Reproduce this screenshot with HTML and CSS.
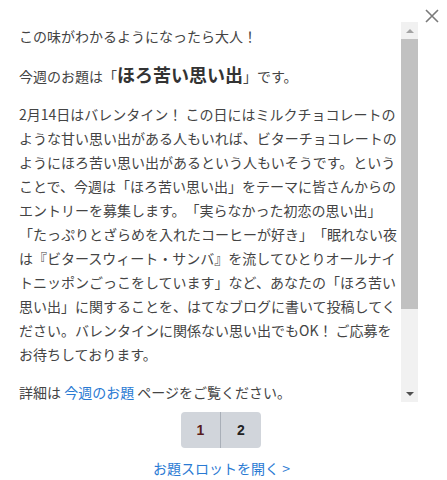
FILE: index.html
```html
<!DOCTYPE html>
<html lang="ja">
<head>
  <meta charset="UTF-8" />
  <title>今週のお題</title>
  <link rel="stylesheet" href="styles.css">
</head>
<body>
  <div class="modal">
    <button type="button" class="close" aria-label="閉じる">
      <svg width="14" height="14" viewBox="0 0 14 14"><path d="M1 1 L13 13 M13 1 L1 13" stroke="#7a7a7a" stroke-width="1.6" fill="none"/></svg>
    </button>

    <div class="scroll-area">
      <div class="theme-body">
        <p>この味がわかるようになったら大人！</p>
        <p>今週のお題は「<strong class="theme-title">ほろ苦い思い出</strong>」です。</p>
        <p>2月14日はバレンタイン！ この日にはミルクチョコレートのような甘い思い出がある人もいれば、ビターチョコレートのようにほろ苦い思い出があるという人もいそうです。ということで、今週は「ほろ苦い思い出」をテーマに皆さんからのエントリーを募集します。「実らなかった初恋の思い出」「たっぷりとざらめを入れたコーヒーが好き」「眠れない夜は『ビタースウィート・サンバ』を流してひとりオールナイトニッポンごっこをしています」など、あなたの「ほろ苦い思い出」に関することを、はてなブログに書いて投稿してください。バレンタインに関係ない思い出でもOK！ ご応募をお待ちしております。</p>
        <p>詳細は <a href="#">今週のお題</a> ページをご覧ください。</p>
      </div>
      <div class="scrollbar" aria-hidden="true">
        <div class="sb-btn">
          <svg width="8" height="4" viewBox="0 0 8 4"><path d="M0 4 L4 0 L8 4 Z" fill="#a3a3a3"/></svg>
        </div>
        <div class="sb-track"><div class="sb-thumb"></div></div>
        <div class="sb-btn">
          <svg width="8" height="4" viewBox="0 0 8 4"><path d="M0 0 L8 0 L4 4 Z" fill="#505050"/></svg>
        </div>
      </div>
    </div>

    <div class="pager">
      <button type="button" class="current">1</button>
      <button type="button">2</button>
    </div>

    <a class="slot-link" href="#">お題スロットを開く &gt;</a>
  </div>
</body>
</html>
```

FILE: styles.css
```css
body {
  margin: 0;
  background: #fff;
  color: #444;
  font-family: "Noto Sans CJK JP", "Noto Sans", sans-serif;
  font-size: 14px;
  text-spacing-trim: space-all;
}
.modal {
  position: relative;
  width: 447px;
  height: 480px;
  padding: 22px 29px 0 19px;
  box-sizing: border-box;
  display: flex;
  flex-direction: column;
  align-items: stretch;
}
.close {
  position: absolute;
  top: 9px;
  right: 8px;
  width: 14px;
  height: 14px;
  padding: 0;
  border: none;
  background: none;
  cursor: pointer;
  line-height: 0;
}

.scroll-area {
  display: flex;
  height: 380px;
}
.theme-body {
  flex: 1;
  overflow: hidden;
  line-height: 24px;
  padding-top: 2px;
}
.theme-body p {
  margin: 0 0 14px 0;
}
.theme-title {
  font-size: 18px;
  font-weight: bold;
  color: #333;
}
.theme-body a {
  color: #2a7ad3;
  text-decoration: none;
}

.scrollbar {
  width: 17px;
  flex: none;
  display: flex;
  flex-direction: column;
  background: #f1f1f1;
}
.sb-btn {
  height: 17px;
  display: flex;
  align-items: center;
  justify-content: center;
}
.sb-track {
  flex: 1;
}
.sb-thumb {
  height: 270px;
  background: #c1c1c1;
}

.pager {
  display: flex;
  justify-content: center;
  margin: 10px 0 0 0;
  padding-left: 5px;
}
.pager button {
  width: 40px;
  height: 36px;
  padding: 0;
  border: none;
  background: #d1d5db;
  font-family: "Liberation Sans", Arial, sans-serif;
  font-size: 14px;
  font-weight: bold;
  color: #222;
  cursor: pointer;
}
.pager button:first-child {
  border-radius: 4px 0 0 4px;
  border-right: 1px solid #a9afb8;
}
.pager button:last-child {
  border-radius: 0 4px 4px 0;
}
.pager .current {
  color: #5a1c1c;
}

.slot-link {
  align-self: center;
  margin-top: 9px;
  padding-left: 6px;
  color: #2a7ad3;
  text-decoration: none;
  line-height: 22px;
}
```
